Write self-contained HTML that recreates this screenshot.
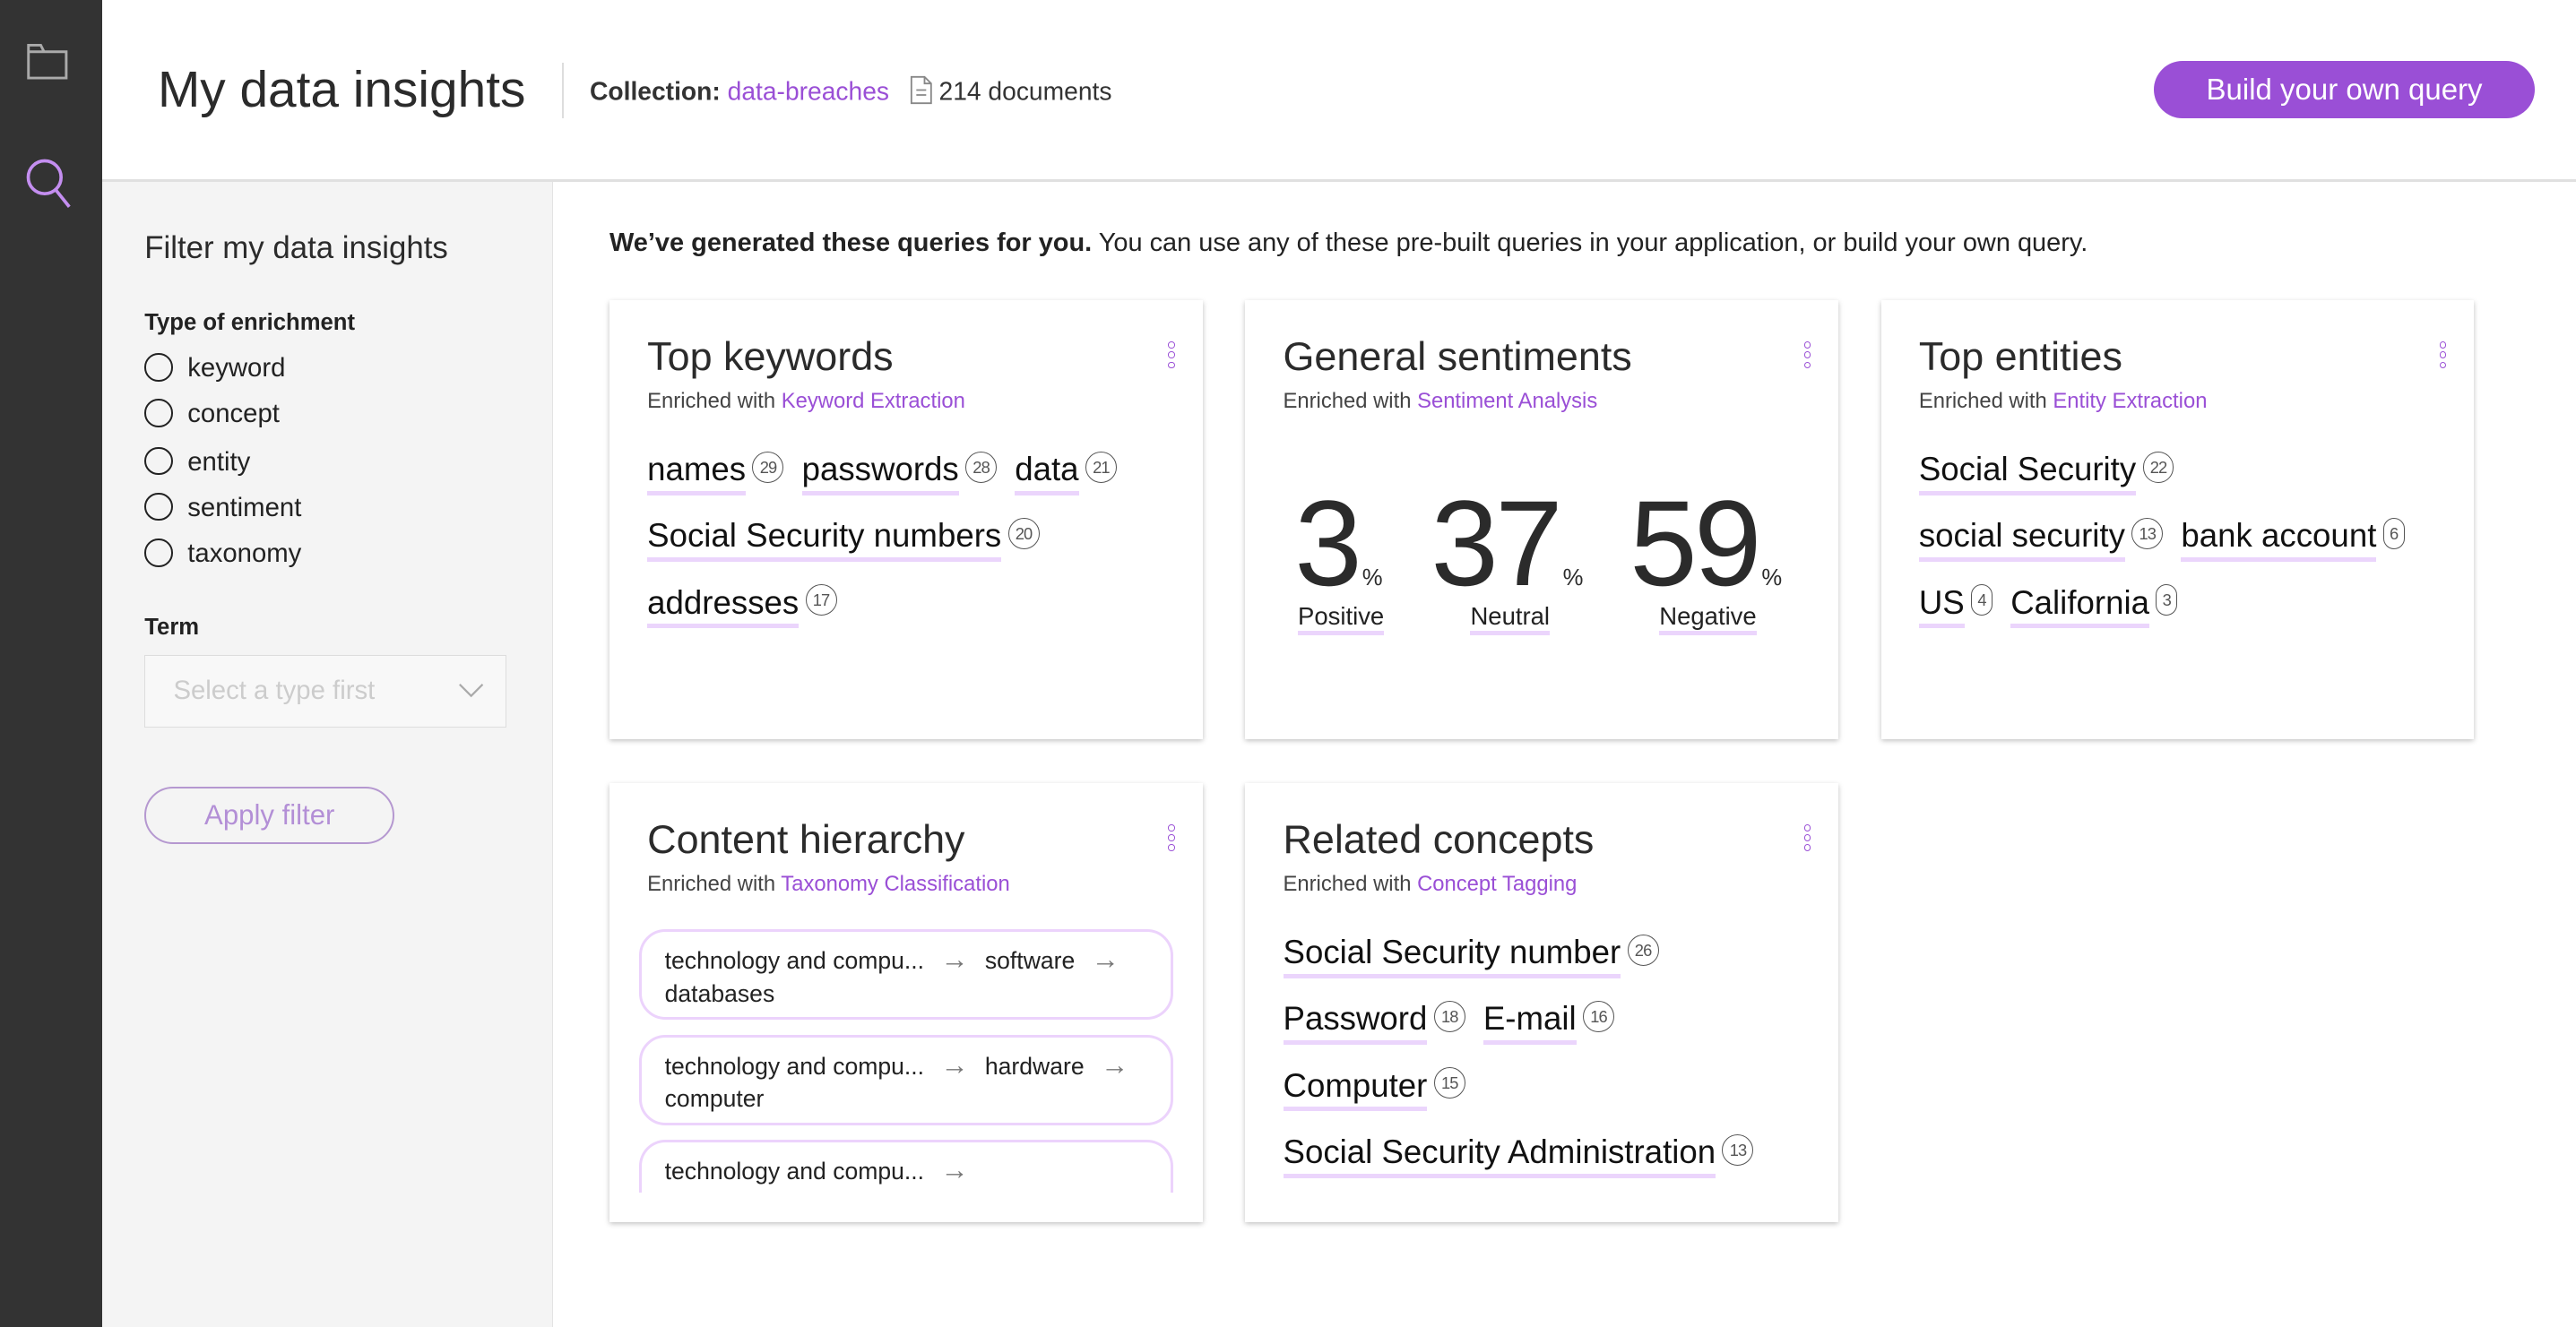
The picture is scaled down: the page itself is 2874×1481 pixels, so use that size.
<!DOCTYPE html>
<html><head><meta charset="utf-8">
<style>
html,body{margin:0;padding:0;}
body{width:1568px;height:808px;zoom:1.83291;overflow:hidden;font-family:"Liberation Sans",Arial,sans-serif;color:#222;background:#fff;position:relative;}
.abs{position:absolute;}
.side{left:0;top:0;width:62px;height:808px;background:#333;}
.hdr{left:62px;top:0;width:1506px;height:109px;border-bottom:2px solid #e0e0e0;background:#fff;}
.panel{left:62px;top:111px;width:274px;height:697px;background:#f4f4f4;border-right:1px solid #e3e3e3;}
.card{background:#fff;box-shadow:0 1px 3px rgba(0,0,0,.25);width:361px;height:267px;}
.card h2{position:absolute;left:23px;top:20px;margin:0;font-weight:normal;font-size:24.5px;color:#2b2b2b;}
.card .sub{position:absolute;left:23px;top:54px;font-size:13px;color:#444;}
.sub a{color:#9a4fd6;text-decoration:none;}
.keb{position:absolute;right:15px;top:25px;width:6px;}
.keb b{display:block;width:3px;height:3px;border:1px solid #9a4fd6;border-radius:50%;margin-bottom:2px;}
.kws{position:absolute;left:23px;top:91px;right:10px;}
.row{height:40.5px;white-space:nowrap;}
.w{display:inline-block;font-size:20px;color:#111;border-bottom:3px solid #ebd5fc;line-height:24px;padding-bottom:1px;}
.c{display:inline-block;width:18px;height:18px;border:1px solid #555;border-radius:50%;font-size:10px;font-style:normal;color:#555;text-align:center;line-height:18px;vertical-align:top;margin:1px 11px 0 4px;letter-spacing:-.5px;}
.radio{position:absolute;left:88px;font-size:16px;color:#222;}
.radio span{display:inline-block;width:15px;height:15px;border:1.5px solid #222;border-radius:50%;vertical-align:-3px;margin-right:9px;}
.tax{position:absolute;left:18px;width:325px;border:2px solid #ecd3fc;border-radius:16px;font-size:14.5px;line-height:20px;padding:7px 0 7px 14px;box-sizing:border-box;color:#222;}
.tax .ar{color:#777;margin:0 10px;font-size:17px;}
.num{position:absolute;top:105px;font-size:74px;color:#2b2b2b;letter-spacing:-2px;}
.pct{font-size:14px;letter-spacing:0;margin-left:2px;}
.lab{position:absolute;top:183px;font-size:15px;color:#222;border-bottom:3px solid #ebd5fc;line-height:18px;}
</style></head><body>
<div class="abs side">
  <svg class="abs" style="left:16px;top:24px" width="26" height="26" viewBox="0 0 26 26"><path d="M1.5 3.5V23.5H24.5V7.5H11L9 3.5Z M1.5 7.5H11" fill="none" stroke="#aaa" stroke-width="1.6"/></svg>
  <svg class="abs" style="left:14px;top:95px" width="32" height="34" viewBox="0 0 32 34"><circle cx="13" cy="13" r="10" fill="none" stroke="#c48ef0" stroke-width="2"/><path d="M20 21L28 31" stroke="#c48ef0" stroke-width="2"/></svg>
</div>
<div class="abs hdr">
  <div class="abs" style="left:34px;top:37px;font-size:31px;color:#2b2b2b;">My data insights</div>
  <div class="abs" style="left:280px;top:38px;width:1px;height:34px;background:#ddd;"></div>
  <div class="abs" style="left:297px;top:46px;font-size:15.4px;color:#333;"><b>Collection:</b> <span style="color:#9a4fd6">data-breaches</span>
   <svg style="vertical-align:-3px;margin:0 4px 0 8px" width="14" height="18" viewBox="0 0 14 18"><path d="M1 1H9L13 5V17H1Z M9 1V5H13 M4 9H10 M4 12H10" fill="none" stroke="#888" stroke-width="1"/></svg>214 documents</div>
  <div class="abs" style="left:1249px;top:37px;width:232px;height:35px;border-radius:18px;background:#9a4fd6;color:#fff;font-size:18px;text-align:center;line-height:35px;">Build your own query</div>
</div>
<div class="abs panel">
  <div class="abs" style="left:26px;top:29px;font-size:19px;color:#2b2b2b;">Filter my data insights</div>
  <div class="abs" style="left:26px;top:78px;font-size:14px;font-weight:bold;color:#222;">Type of enrichment</div>
</div>
<div class="radio" style="top:215px"><span></span>keyword</div>
<div class="radio" style="top:243px"><span></span>concept</div>
<div class="radio" style="top:272px"><span></span>entity</div>
<div class="radio" style="top:300px"><span></span>sentiment</div>
<div class="radio" style="top:328px"><span></span>taxonomy</div>
<div class="abs" style="left:88px;top:374px;font-size:14px;font-weight:bold;">Term</div>
<div class="abs" style="left:88px;top:399px;width:219px;height:43px;border:1px solid #ddd;background:#f8f8f8;">
  <div class="abs" style="left:17px;top:12px;font-size:16px;color:#ccc;">Select a type first</div>
  <svg class="abs" style="left:190px;top:16px" width="16" height="10" viewBox="0 0 16 10"><path d="M1 1L8 8L15 1" fill="none" stroke="#aaa" stroke-width="1.2"/></svg>
</div>
<div class="abs" style="left:88px;top:479px;width:150px;height:33px;border:1.5px solid #b598d0;border-radius:18px;color:#b38fd6;font-size:17px;text-align:center;line-height:33px;">Apply filter</div>

<div class="abs" style="left:371px;top:139px;font-size:15.8px;color:#222;"><b>We’ve generated these queries for you.</b> You can use any of these pre-built queries in your application, or build your own query.</div>

<div class="abs card" style="left:371px;top:183px;">
  <h2>Top keywords</h2><div class="sub">Enriched with <a>Keyword Extraction</a></div>
  <div class="keb"><b></b><b></b><b></b></div>
  <div class="kws">
    <div class="row"><span class="w">names</span><i class="c">29</i><span class="w">passwords</span><i class="c">28</i><span class="w">data</span><i class="c">21</i></div>
    <div class="row"><span class="w">Social Security numbers</span><i class="c">20</i></div>
    <div class="row"><span class="w">addresses</span><i class="c">17</i></div>
  </div>
</div>
<div class="abs card" style="left:758px;top:183px;">
  <h2>General sentiments</h2><div class="sub">Enriched with <a>Sentiment Analysis</a></div>
  <div class="keb"><b></b><b></b><b></b></div>
  <div class="num" style="left:30px">3<span class="pct">%</span></div>
  <div class="num" style="left:113px">37<span class="pct">%</span></div>
  <div class="num" style="left:234px">59<span class="pct">%</span></div>
  <div class="lab" style="left:32px">Positive</div>
  <div class="lab" style="left:137px">Neutral</div>
  <div class="lab" style="left:252px">Negative</div>
</div>
<div class="abs card" style="left:1145px;top:183px;">
  <h2>Top entities</h2><div class="sub">Enriched with <a>Entity Extraction</a></div>
  <div class="keb"><b></b><b></b><b></b></div>
  <div class="kws">
    <div class="row"><span class="w">Social Security</span><i class="c">22</i></div>
    <div class="row"><span class="w">social security</span><i class="c">13</i><span class="w">bank account</span><i class="c" style="border-radius:7px;width:12px">6</i></div>
    <div class="row"><span class="w">US</span><i class="c" style="border-radius:7px;width:12px">4</i><span class="w">California</span><i class="c" style="border-radius:7px;width:12px">3</i></div>
  </div>
</div>
<div class="abs card" style="left:371px;top:477px;">
  <h2>Content hierarchy</h2><div class="sub">Enriched with <a>Taxonomy Classification</a></div>
  <div class="keb"><b></b><b></b><b></b></div>
  <div class="tax" style="top:89px;height:55px;">technology and compu...<span class="ar">→</span>software<span class="ar">→</span><br>databases</div>
  <div class="tax" style="top:153px;height:55px;">technology and compu...<span class="ar">→</span>hardware<span class="ar">→</span><br>computer</div>
  <div class="tax" style="top:217px;height:32px;border-bottom:none;border-radius:16px 16px 0 0;">technology and compu...<span class="ar">→</span></div>
</div>
<div class="abs card" style="left:758px;top:477px;">
  <h2>Related concepts</h2><div class="sub">Enriched with <a>Concept Tagging</a></div>
  <div class="keb"><b></b><b></b><b></b></div>
  <div class="kws">
    <div class="row"><span class="w">Social Security number</span><i class="c">26</i></div>
    <div class="row"><span class="w">Password</span><i class="c">18</i><span class="w">E-mail</span><i class="c">16</i></div>
    <div class="row"><span class="w">Computer</span><i class="c">15</i></div>
    <div class="row"><span class="w">Social Security Administration</span><i class="c">13</i></div>
  </div>
</div>
</body></html>
